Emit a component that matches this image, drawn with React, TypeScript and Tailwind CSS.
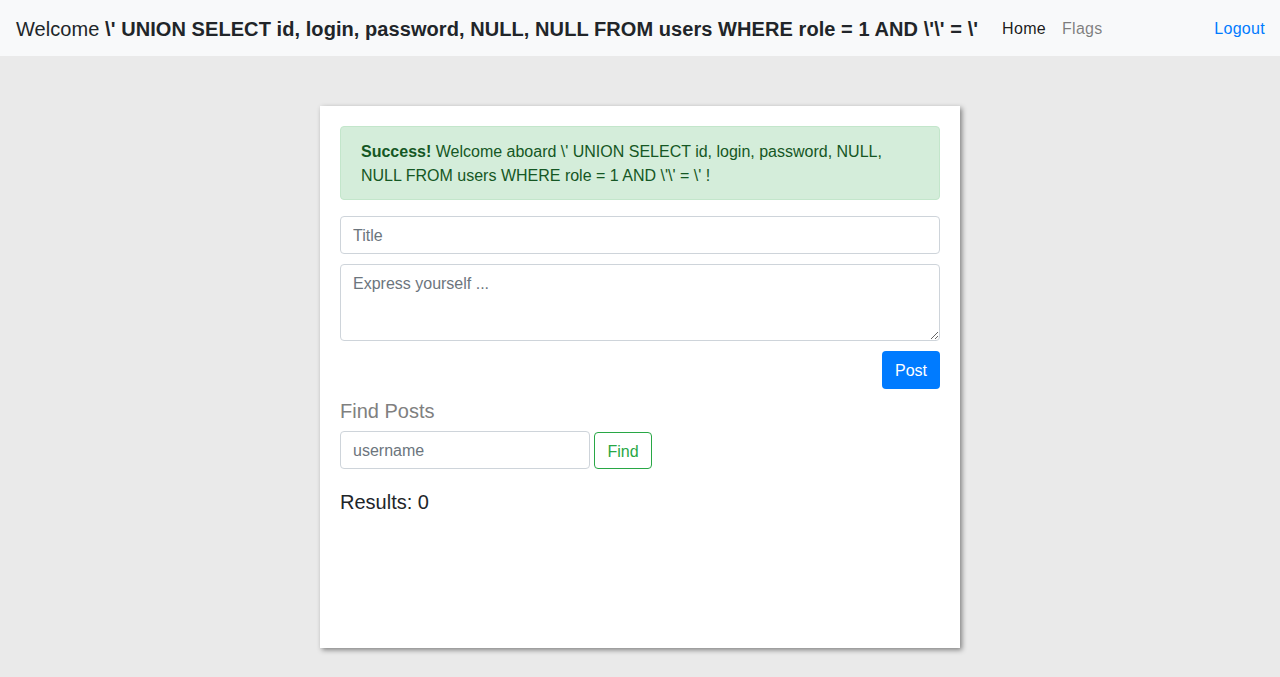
export default function App() {
  const inj = "\\' UNION SELECT id, login, password, NULL, NULL FROM users WHERE role = 1 AND \\'\\' = \\'";
  return (
    <div className="min-h-[677px] bg-[#eaeaea] font-['Liberation_Sans',Arial,sans-serif] text-[16px] text-[#212529]">
      <nav className="flex h-[56px] items-center bg-[#f8f9fa] px-4 pt-[2px]">
        <div className="mr-4 text-[20px] leading-[30px] tracking-[0.07px] text-[#212529]">
          Welcome <b>{inj}</b>
        </div>
        <a className="px-2 leading-6 tracking-[0.3px] text-black/90" href="#">
          Home
        </a>
        <a className="px-2 leading-6 tracking-[0.3px] text-black/50" href="#">
          Flags
        </a>
        <a className="ml-auto mr-[-1px] leading-6 tracking-[0.3px] text-[#007bff]" href="#">
          Logout
        </a>
      </nav>
      <div className="flex justify-center pt-[50px]">
        <div className="h-[542px] w-[640px] bg-white p-5 shadow-[2px_2px_5px_rgba(0,0,0,0.45)]">
          <div className="rounded border border-[#c3e6cb] bg-[#d4edda] px-5 pt-[13px] pb-[11px] leading-6 text-[#155724]">
            <b>Success!</b> Welcome aboard \' UNION SELECT id, login, password, NULL, <br />
            NULL FROM users WHERE role = 1 AND \'\' = \' !
          </div>
          <input
            className="mt-4 block h-[38px] w-full rounded border border-[#ced4da] px-3 pt-[2px] text-[16px] placeholder:text-[#6c757d] outline-none"
            placeholder="Title"
          />
          <textarea
            className="mt-[10px] block h-[77px] w-full rounded border border-[#ced4da] px-3 pt-[7px] pb-[5px] text-[16px] leading-6 placeholder:text-[#6c757d] outline-none"
            placeholder="Express yourself ..."
          />
          <div className="mt-[10px] flex justify-end">
            <button className="h-[38px] w-[58px] rounded bg-[#007bff] pt-[2px] text-white">Post</button>
          </div>
          <h5 className="mt-[10px] text-[20px] leading-6 text-[#808080]">Find Posts</h5>
          <div className="mt-2 flex items-center gap-1">
            <input
              className="block h-[38px] w-[250px] rounded border border-[#ced4da] px-3 pt-[2px] text-[16px] placeholder:text-[#6c757d] outline-none"
              placeholder="username"
            />
            <button className="mt-[1px] h-[37px] w-[58px] rounded border border-[#28a745] pt-[2px] text-[#28a745]">Find</button>
          </div>
          <h5 className="mt-[21px] text-[20px] leading-6">Results: 0</h5>
        </div>
      </div>
    </div>
  );
}
